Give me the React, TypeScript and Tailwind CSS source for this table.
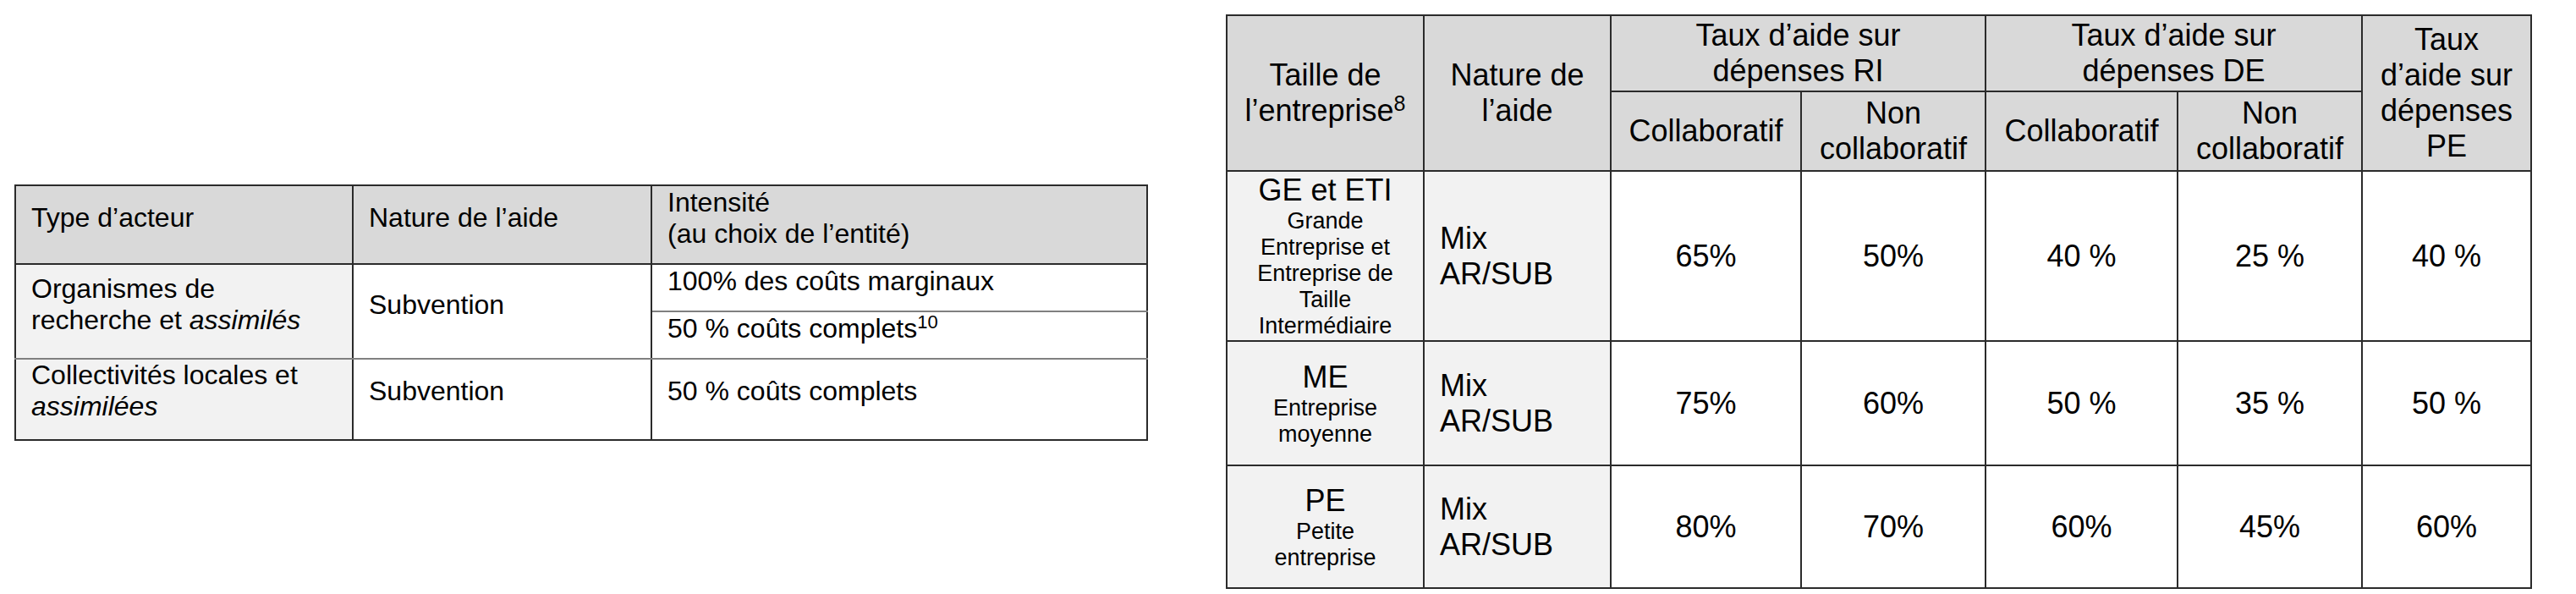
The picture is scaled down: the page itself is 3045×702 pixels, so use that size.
const base = "font-['Liberation_Sans',Arial,sans-serif] text-black";

// left table cell: content sits a little above the middle, like the Word original
const lc = "border-2 border-[#2b2b2b] pl-[18px] pr-[12px] pt-0 pb-[16px] align-middle text-left font-normal";
// right table cell
const rc = "border-2 border-[#2b2b2b] px-[6px] py-0 align-middle text-center font-normal";
const rh = `${rc} bg-[#d9d9d9]`;

const rows = [
  {
    code: "GE et ETI",
    sub: ["Grande", "Entreprise et", "Entreprise de", "Taille", "Intermédiaire"],
    h: "h-[201px]",
    vals: ["65%", "50%", "40 %", "25 %", "40 %"],
  },
  {
    code: "ME",
    sub: ["Entreprise", "moyenne"],
    h: "h-[147px]",
    vals: ["75%", "60%", "50 %", "35 %", "50 %"],
  },
  {
    code: "PE",
    sub: ["Petite", "entreprise"],
    h: "h-[145px]",
    vals: ["80%", "70%", "60%", "45%", "60%"],
  },
];

const ActorTable = () => (
  <table className="table-fixed border-collapse w-[1338px] mt-[201px] text-[32px] leading-[37px]">
    <colgroup>
      <col className="w-[399px]" />
      <col className="w-[353px]" />
      <col className="w-[586px]" />
    </colgroup>
    <tbody>
      <tr className="h-[93px] bg-[#d9d9d9]">
        <th className={lc}>Type d’acteur</th>
        <th className={lc}>Nature de l’aide</th>
        <th className={lc}>
          Intensité
          <br />
          (au choix de l’entité)
        </th>
      </tr>
      <tr className="h-[56px]">
        <td rowSpan={2} className={`${lc} bg-[#f2f2f2] border-b-[#808080]`}>
          Organismes de
          <br />
          recherche et <i>assimilés</i>
        </td>
        <td rowSpan={2} className={`${lc} border-b-[#808080]`}>
          Subvention
        </td>
        <td className={`${lc} pb-[13px] border-b-[#808080]`}>100% des coûts marginaux</td>
      </tr>
      <tr className="h-[56px]">
        <td className={`${lc} pb-[13px] border-b-[#808080]`}>
          50 % coûts complets<sup className="text-[22px]">10</sup>
        </td>
      </tr>
      <tr className="h-[95px]">
        <td className={`${lc} pb-[20px] bg-[#f2f2f2]`}>
          Collectivités locales et
          <br />
          <i>assimilées</i>
        </td>
        <td className={`${lc} pb-[20px]`}>Subvention</td>
        <td className={`${lc} pb-[20px]`}>50 % coûts complets</td>
      </tr>
    </tbody>
  </table>
);

const RateTable = () => (
  <table className="table-fixed border-collapse w-[1542px] text-[36px] leading-[42px]">
    <colgroup>
      <col className="w-[233px]" />
      <col className="w-[221px]" />
      <col className="w-[225px]" />
      <col className="w-[218px]" />
      <col className="w-[227px]" />
      <col className="w-[218px]" />
      <col className="w-[200px]" />
    </colgroup>
    <thead>
      <tr className="h-[90px]">
        <th rowSpan={2} className={rh}>
          Taille de
          <br />
          l’entreprise<sup className="text-[25px]">8</sup>
        </th>
        <th rowSpan={2} className={rh}>
          Nature de
          <br />
          l’aide
        </th>
        <th colSpan={2} className={rh}>
          Taux d’aide sur
          <br />
          dépenses RI
        </th>
        <th colSpan={2} className={rh}>
          Taux d’aide sur
          <br />
          dépenses DE
        </th>
        <th rowSpan={2} className={rh}>
          Taux
          <br />
          d’aide sur
          <br />
          dépenses
          <br />
          PE
        </th>
      </tr>
      <tr className="h-[94px]">
        <th className={rh}>Collaboratif</th>
        <th className={rh}>
          Non
          <br />
          collaboratif
        </th>
        <th className={rh}>Collaboratif</th>
        <th className={rh}>
          Non
          <br />
          collaboratif
        </th>
      </tr>
    </thead>
    <tbody>
      {rows.map((r) => (
        <tr key={r.code} className={r.h}>
          <td className={`${rc} bg-[#f2f2f2]`}>
            <div>{r.code}</div>
            <div className="text-[27px] leading-[31px]">
              {r.sub.map((s) => (
                <div key={s}>{s}</div>
              ))}
            </div>
          </td>
          <td className={`${rc} bg-[#f2f2f2] text-left pl-[18px]`}>
            Mix
            <br />
            AR/SUB
          </td>
          {r.vals.map((v, i) => (
            <td key={i} className={rc}>
              {v}
            </td>
          ))}
        </tr>
      ))}
    </tbody>
  </table>
);

export default function App() {
  return (
    <div className={`${base} bg-white w-[3045px] h-[702px] flex items-start gap-[92px] pt-[17px] pl-[17px]`}>
      <ActorTable />
      <RateTable />
    </div>
  );
}
